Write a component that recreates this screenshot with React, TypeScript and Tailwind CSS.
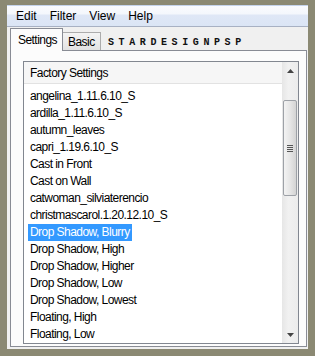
import React from "react";

// Lista de presets mostrada na caixa
const presets = [
  "angelina_1.11.6.10_S",
  "ardilla_1.11.6.10_S",
  "autumn_leaves",
  "capri_1.19.6.10_S",
  "Cast in Front",
  "Cast on Wall",
  "catwoman_silviaterencio",
  "christmascarol.1.20.12.10_S",
  "Drop Shadow, Blurry",
  "Drop Shadow, High",
  "Drop Shadow, Higher",
  "Drop Shadow, Low",
  "Drop Shadow, Lowest",
  "Floating, High",
  "Floating, Low",
];

const selecionado = "Drop Shadow, Blurry";

const listFont = { fontFamily: '"Liberation Sans", Arial, sans-serif' };

function ScrollBar() {
  return (
    <div className="flex w-[16px] flex-col bg-[linear-gradient(to_right,#e6e6e6,#f1f1f1_40%,#ececec)]">
      {/* seta para cima */}
      <div className="flex h-[17px] items-center justify-center">
        <svg width="7" height="4" viewBox="0 0 7 4">
          <path d="M3.5 0 L7 4 L0 4 Z" fill="#444" />
        </svg>
      </div>
      <div className="flex-1 pt-[21px]">
        <div className="mx-[1px] flex h-[96px] items-center justify-center rounded-[2px] border border-[#9da1a7] bg-[linear-gradient(to_right,#f3f3f3,#e6e6e6_50%,#d4d4d4)]">
          <div className="flex flex-col gap-[1px]">
            <div className="h-px w-[6px] bg-[#555]" />
            <div className="h-px w-[6px] bg-[#555]" />
            <div className="h-px w-[6px] bg-[#555]" />
            <div className="h-px w-[6px] bg-[#555]" />
          </div>
        </div>
      </div>
      {/* seta para baixo */}
      <div className="flex h-[17px] items-center justify-center">
        <svg width="7" height="4" viewBox="0 0 7 4">
          <path d="M0 0 L7 0 L3.5 4 Z" fill="#444" />
        </svg>
      </div>
    </div>
  );
}

export default function App() {
  return (
    <div className="h-[356px] w-[315px] bg-[#8b8973] pb-[7px] pl-[7px] pr-[7px] pt-[5px]">
      <div className="flex h-full flex-col bg-[#f0f0f0]">
        {/* Barra de menu */}
        <div
          className="flex h-[22px] items-center gap-[13px] border-b border-t border-b-[#a8b1c3] border-t-[#c4d3ec] bg-[linear-gradient(to_bottom,#f9fbfe_0%,#f4f7fc_40%,#dfe7f6_45%,#dbe5f5_100%)] pl-[9px] text-[12px] text-black"
          style={listFont}
        >
          <span>Edit</span>
          <span>Filter</span>
          <span>View</span>
          <span>Help</span>
        </div>

        {/* Abas */}
        <div className="flex h-[23px] items-end pl-[3px] text-[12px] tracking-[-0.55px] text-black" style={listFont}>
          <div className="relative z-10 -mb-px flex h-[23px] w-[53px] items-center border border-b-0 border-[#898c95] bg-[#fcfcfc] pl-[7px]">
            Settings
          </div>
          <div className="-ml-px flex h-[18px] w-[39px] items-center border border-b-0 border-[#acacac] bg-[linear-gradient(to_bottom,#f4f4f4,#e2e2e2)] pl-[5px]">
            Basic
          </div>
          <div
            className="mb-[2px] ml-[7px] text-[10px] font-bold leading-[10px] tracking-[4.6px] text-[#111]"
            style={{ fontFamily: '"Liberation Mono", monospace' }}
          >
            STARDESIGNPSP
          </div>
        </div>

        {/* Painel da aba */}
        <div className="mb-[2px] ml-[3px] mr-[1px] flex flex-1 flex-col border border-[#898c95] bg-[#fcfcfc] pb-[2px] pl-[12px] pr-[7px] pt-[10px]">
          <div className="flex flex-1 border border-[#828790] bg-white">
            <div className="flex flex-1 flex-col text-[12px] tracking-[-0.55px] text-black" style={listFont}>
              <div className="flex h-[22px] items-center border-b border-[#e2e2e2] bg-[#f6f6f6] pl-[6px]">
                Factory Settings
              </div>
              <div className="pt-[3px]">
                {presets.map((nome) => (
                  <div key={nome} className="h-[17px] pl-[4px]">
                    <span
                      className={
                        nome === selecionado
                          ? "inline-block h-[17px] whitespace-nowrap bg-[#3399ff] px-[2px] leading-[17px] text-white"
                          : "inline-block h-[17px] whitespace-nowrap px-[2px] leading-[17px]"
                      }
                    >
                      {nome}
                    </span>
                  </div>
                ))}
              </div>
            </div>
            <ScrollBar />
          </div>
        </div>
      </div>
    </div>
  );
}
